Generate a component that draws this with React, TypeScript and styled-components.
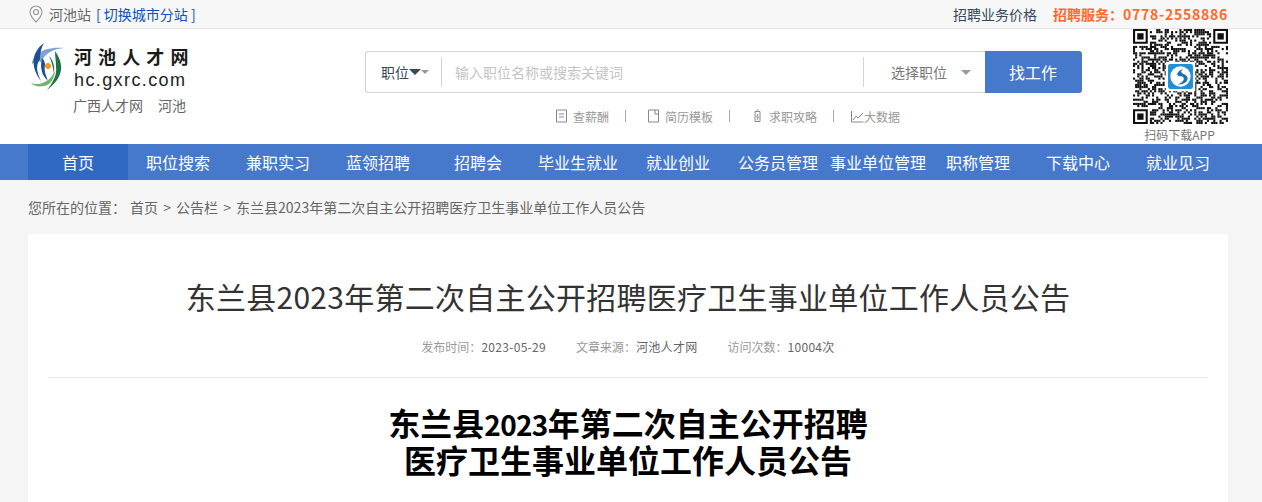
import React from 'react';
import styled, { createGlobalStyle } from 'styled-components';

const cjk = `"Noto Sans CJK SC", "Liberation Sans", sans-serif`;

const GlobalStyle = createGlobalStyle`
  html, body {
    margin: 0;
    padding: 0;
    background: #f5f5f5;
    font-family: ${cjk};
    overflow: hidden;
  }
  * { box-sizing: border-box; }
`;

const Page = styled.div`
  width: 1262px;
  height: 502px;
  overflow: hidden;
`;

const Wrap = styled.div`
  width: 1200px;
  margin-left: 28px;
`;

// 顶部
const TopBar = styled.div`
  height: 29px;
  background: #f7f7f7;
  border-bottom: 1px solid #e6e6e6;
`;

const TopInner = styled(Wrap)`
  height: 28px;
  display: flex;
  align-items: center;
  justify-content: space-between;
  font-size: 14px;
  line-height: 24px;
`;

const City = styled.div`
  display: flex;
  align-items: center;
  color: #666;
`;

const PinIcon = styled.svg`
  width: 14px;
  height: 18px;
  margin: 0 6px 0 1px;
`;

const SwitchLink = styled.a`
  color: #0b52c0;
  margin-left: 5px;
`;

const TopRight = styled.div`
  display: flex;
  align-items: center;
`;

const PriceLink = styled.a`
  color: #34495e;
  font-size: 14px;
  margin-right: 16px;
`;

const Hotline = styled.span`
  color: #ff6a2b;
  font-weight: 700;
  font-size: 14px;
`;

const HotlineNum = styled.span`
  letter-spacing: 0.75px;
`;

// 头部
const Header = styled.div`
  height: 115px;
  background: #fff;
`;

const HeaderInner = styled(Wrap)`
  display: flex;
  height: 115px;
`;

const LogoBox = styled.div`
  width: 337px;
  padding: 14px 0 0 3px;
`;

const LogoRow = styled.div`
  display: flex;
`;

const LogoMark = styled.svg`
  width: 34px;
  height: 48px;
  margin-right: 9px;
  flex: none;
`;

const LogoText = styled.div`
  display: flex;
  flex-direction: column;
`;

const LogoName = styled.div`
  font-size: 18px;
  line-height: 26px;
  font-weight: 700;
  letter-spacing: 6.1px;
  color: #1a1a1a;
  white-space: nowrap;
`;

const LogoUrl = styled.div`
  font-family: "Liberation Sans", sans-serif;
  font-size: 18px;
  line-height: 22px;
  letter-spacing: 1.4px;
  color: #222;
`;

const LogoSub = styled.div`
  display: flex;
  gap: 15px;
  margin: 4px 0 0 42px;
  font-size: 14px;
  line-height: 20px;
  color: #666;
`;

const SearchCol = styled.div`
  width: 717px;
  padding-top: 22px;
  flex: none;
`;

const SearchBar = styled.div`
  display: flex;
  height: 42px;
  width: 717px;
`;

const SearchBox = styled.div`
  width: 620px;
  height: 42px;
  border: 1px solid #d4d4d4;
  border-right: 0;
  border-radius: 3px 0 0 3px;
  display: flex;
  align-items: center;
  font-size: 14px;
`;

const TypeSelect = styled.div`
  width: 76px;
  height: 30px;
  border-right: 1px solid #d4d4d4;
  padding-left: 15px;
  display: flex;
  align-items: center;
  color: #34495e;
`;

const Caret = styled.i<{ $color: string; $size: number }>`
  display: block;
  width: 0;
  height: 0;
  border-left: ${p => p.$size}px solid transparent;
  border-right: ${p => p.$size}px solid transparent;
  border-top: ${p => p.$size}px solid ${p => p.$color};
`;

const Placeholder = styled.div`
  flex: 1;
  padding-left: 13px;
  color: #c4c4c4;
`;

const JobSelect = styled.div`
  width: 122px;
  height: 30px;
  border-left: 1px solid #d4d4d4;
  padding-left: 27px;
  display: flex;
  align-items: center;
  gap: 14px;
  color: #777;
`;

const SearchButton = styled.button`
  width: 97px;
  height: 42px;
  border: 0;
  padding: 0 1px 0 0;
  background: #4679cc;
  color: #fff;
  font-family: inherit;
  font-size: 16px;
  border-radius: 0 3px 3px 0;
`;

const QuickLinks = styled.div`
  display: flex;
  align-items: center;
  height: 20px;
  margin-top: 13px;
  padding-left: 190px;
  font-size: 12px;
  color: #999;
`;

const QuickLink = styled.a<{ $tight?: boolean }>`
  display: flex;
  align-items: center;
  gap: ${p => (p.$tight ? 0 : 5)}px;
  margin-left: ${p => (p.$tight ? -4 : 0)}px;
  white-space: nowrap;
`;

const QuickIcon = styled.svg`
  width: 13px;
  height: 14px;
  flex: none;
`;

const QuickSep = styled.span`
  width: 1px;
  height: 12px;
  background: #aaa;
  margin: 0 21px 0 16px;
`;

const QrCol = styled.div`
  flex: none;
  width: 95px;
  margin-left: 51px;
  margin-right: -1px;
  display: flex;
  flex-direction: column;
  align-items: center;
`;

const QrCode = styled.svg`
  width: 95px;
  height: 95px;
  display: block;
`;

const QrCaption = styled.div`
  margin: 2px 2px 0 0;
  font-size: 12px;
  line-height: 17px;
  color: #777;
  white-space: nowrap;
`;

// 导航
const Nav = styled.div`
  height: 36px;
  background: #4679cc;
`;

const NavInner = styled(Wrap)`
  display: flex;
`;

const NavItem = styled.a<{ $active?: boolean }>`
  flex: 0 0 100px;
  height: 36px;
  line-height: 36px;
  text-align: center;
  color: #fff;
  font-size: 16px;
  white-space: nowrap;
  background: ${p => (p.$active ? '#2f69c4' : 'transparent')};
`;

// 面包屑
const Crumbs = styled(Wrap)`
  height: 54px;
  display: flex;
  align-items: center;
  font-size: 14px;
  color: #666;
  white-space: pre;
`;

const CrumbPath = styled.span`
  margin-left: 4px;
  word-spacing: 2px;
`;

// 正文
const Card = styled(Wrap)`
  background: #fff;
  padding: 0 20px;
  height: 300px;
`;

const Title = styled.h1`
  margin: 0;
  padding-top: 40px;
  font-size: 30px;
  line-height: 44px;
  font-weight: 400;
  letter-spacing: 0.25px;
  color: #333;
  text-align: center;
  white-space: nowrap;
`;

const Meta = styled.div`
  display: flex;
  justify-content: center;
  gap: 30px;
  margin-top: 19px;
  padding-bottom: 20px;
  border-bottom: 1px solid #e8e8e8;
  font-size: 12px;
  line-height: 20px;
  color: #999;
`;

const MetaValue = styled.span`
  color: #666;
  letter-spacing: 0.3px;
`;

const Headline = styled.h2`
  margin: 27px 0 0;
  font-size: 32px;
  line-height: 35px;
  font-weight: 700;
  color: #000;
  text-align: center;
`;

const HeadlineYear = styled.span`
  font-size: 28px;
  letter-spacing: -0.7px;
`;

const navItems = ['首页', '职位搜索', '兼职实习', '蓝领招聘', '招聘会', '毕业生就业', '就业创业', '公务员管理', '事业单位管理', '职称管理', '下载中心', '就业见习'];

// 二维码:固定种子生成,只求外观接近
const QR_SIZE = 45;
const inFinder = (x: number, y: number) =>
  (x < 8 && y < 8) || (x >= QR_SIZE - 8 && y < 8) || (x < 8 && y >= QR_SIZE - 8);

const qrCells = (() => {
  const cells: [number, number][] = [];
  let seed = 20230529;
  for (let y = 0; y < QR_SIZE; y++) {
    for (let x = 0; x < QR_SIZE; x++) {
      seed = (seed * 1664525 + 1013904223) >>> 0;
      if (!inFinder(x, y) && seed >>> 24 < 128) cells.push([x, y]);
    }
  }
  return cells;
})();

const Finder: React.FC<{ x: number; y: number }> = ({ x, y }) => (
  <g>
    <path d={`M${x} ${y}h7v7h-7zM${x + 1} ${y + 1}v5h5v-5z`} fill="#111" fillRule="evenodd" />
    <rect x={x + 2} y={y + 2} width="3" height="3" fill="#111" />
  </g>
);

const App: React.FC = () => {
  return (
    <Page>
      <GlobalStyle />
      <TopBar>
        <TopInner>
          <City>
            <PinIcon viewBox="0 0 14 18">
              <path d="M7 1a6 6 0 0 0-6 6c0 4 6 10 6 10s6-6 6-10a6 6 0 0 0-6-6z" fill="none" stroke="#999" strokeWidth="1.2" />
              <circle cx="7" cy="7" r="2.5" fill="none" stroke="#999" strokeWidth="1.2" />
            </PinIcon>
            河池站
            <SwitchLink>[ 切换城市分站 ]</SwitchLink>
          </City>
          <TopRight>
            <PriceLink>招聘业务价格</PriceLink>
            <Hotline>
              招聘服务：<HotlineNum>0778-2558886</HotlineNum>
            </Hotline>
          </TopRight>
        </TopInner>
      </TopBar>

      <Header>
        <HeaderInner>
          <LogoBox>
            <LogoRow>
              <LogoMark viewBox="0 0 34 48">
                <path d="M1 21C1 13 11 3 33 5 23 6 15 9 10 19 7 18 4 19 1 21z" fill="#7ea3d2" />
                <path d="M13 0C3 7-3 21 10 38 5 28 5 22 9 16 9 10 10 5 13 0z" fill="#1d4f96" />
                <path d="M11 15c-2 8-1 17 6 23-3-7-4-12-3-16 0-3-1-5-3-7z" fill="#1d4f96" />
                <path d="M0 40c8 3 18 0 24-12-1 9-5 14-11 15-5 1-10 0-13-3z" fill="#6fb56b" />
                <path d="M24 8c7 10 12 24-8 39 7-9 10-16 9-23 0-6-1-11-1-16z" fill="#217345" />
                <path d="M18 13c4 4 6 10 5 18-1-6-2-12-5-18z" fill="#217345" />
                <circle cx="17" cy="23" r="3" fill="#f39a1e" />
              </LogoMark>
              <LogoText>
                <LogoName>河池人才网</LogoName>
                <LogoUrl>hc.gxrc.com</LogoUrl>
              </LogoText>
            </LogoRow>
            <LogoSub>
              <span>广西人才网</span>
              <span>河池</span>
            </LogoSub>
          </LogoBox>

          <SearchCol>
            <SearchBar>
              <SearchBox>
                <TypeSelect>
                  职位
                  <Caret $color="#34495e" $size={6.5} />
                  <Caret $color="#999" $size={4.5} />
                </TypeSelect>
                <Placeholder>输入职位名称或搜索关键词</Placeholder>
                <JobSelect>
                  选择职位
                  <Caret $color="#999" $size={5} />
                </JobSelect>
              </SearchBox>
              <SearchButton>找工作</SearchButton>
            </SearchBar>
            <QuickLinks>
              <QuickLink>
                <QuickIcon viewBox="0 0 13 14">
                  <path d="M1.500 1h10v12h-10zM4 5h5M4 8h5" fill="none" stroke="#888" />
                </QuickIcon>
                查薪酬
              </QuickLink>
              <QuickSep />
              <QuickLink>
                <QuickIcon viewBox="0 0 13 14">
                  <path d="M1.500 1h10v12h-10zM8 1v4h3" fill="none" stroke="#888" />
                </QuickIcon>
                简历模板
              </QuickLink>
              <QuickSep />
              <QuickLink>
                <QuickIcon viewBox="0 0 13 14">
                  <path d="M4 2.500h5v10H4zM5.500 1h2M7 5L5.500 8h2L6 11" fill="none" stroke="#888" />
                </QuickIcon>
                求职攻略
              </QuickLink>
              <QuickSep />
              <QuickLink $tight>
                <QuickIcon viewBox="0 0 13 14">
                  <path d="M.5 2v11h12M2 11l3-4 2 2 5-5" fill="none" stroke="#888" />
                </QuickIcon>
                大数据
              </QuickLink>
            </QuickLinks>
          </SearchCol>

          <QrCol>
            <QrCode viewBox="0 0 45 45">
              {qrCells.map(([x, y]) => (
                <rect key={`${x}-${y}`} x={x} y={y} width="1" height="1" fill="#111" />
              ))}
              <Finder x={0} y={0} />
              <Finder x={38} y={0} />
              <Finder x={0} y={38} />
              <rect x="15.500" y="15.500" width="14" height="14" fill="#fff" />
              <rect x="16.600" y="16.600" width="11.800" height="11.800" rx="1" fill="#1f8fd6" />
              <circle cx="22.500" cy="22.500" r="4.800" fill="#fff" />
              <path d="M23.700 18.800c-3.400 1.400-3.400 3.600-1.200 3.600s2.400 2.400-1.400 4c4.800 0 6-3.400 3.600-4.700s-2.200-1.300-1-2.900z" fill="#1f6fb5" />
            </QrCode>
            <QrCaption>扫码下载APP</QrCaption>
          </QrCol>
        </HeaderInner>
      </Header>

      <Nav>
        <NavInner>
          {navItems.map((item, index) => (
            <NavItem key={item} $active={index === 0}>
              {item}
            </NavItem>
          ))}
        </NavInner>
      </Nav>

      <Crumbs>
        您所在的位置：<CrumbPath>首页 &gt; 公告栏 &gt; 东兰县2023年第二次自主公开招聘医疗卫生事业单位工作人员公告</CrumbPath>
      </Crumbs>

      <Card>
        <Title>东兰县2023年第二次自主公开招聘医疗卫生事业单位工作人员公告</Title>
        <Meta>
          <span>发布时间：<MetaValue>2023-05-29</MetaValue></span>
          <span>文章来源：<MetaValue>河池人才网</MetaValue></span>
          <span>访问次数：<MetaValue>10004次</MetaValue></span>
        </Meta>
        <Headline>
          东兰县<HeadlineYear>2023</HeadlineYear>年第二次自主公开招聘
          <br />
          医疗卫生事业单位工作人员公告
        </Headline>
      </Card>
    </Page>
  );
};

export default App;
